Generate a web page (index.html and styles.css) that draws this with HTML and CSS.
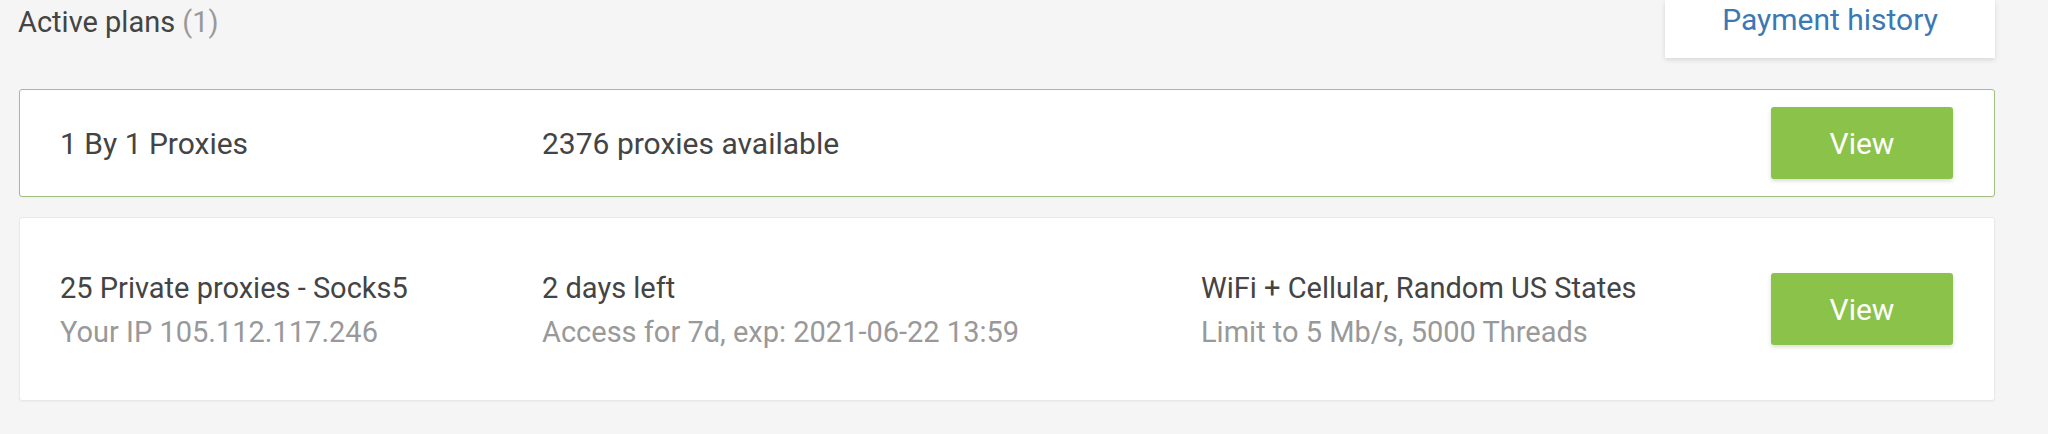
FILE: index.html
```html
<!DOCTYPE html>
<html lang="en">
  <head>
    <meta charset="UTF-8" />
    <meta name="viewport" content="width=device-width, initial-scale=1.0" />
    <title>Active plans</title>
    <link rel="stylesheet" href="styles.css">
  </head>
  <body>
    <div class="page">
      <div class="plans-header">
        <h2 class="plans-title">Active plans <span class="count">(1)</span></h2>
        <a href="#" class="history-btn">Payment history</a>
      </div>

      <div class="plan plan-active">
        <div class="col col-name">
          <div class="primary">1 By 1 Proxies</div>
        </div>
        <div class="col col-status">
          <div class="primary">2376 proxies available</div>
        </div>
        <div class="col col-info"></div>
        <button class="btn">View</button>
      </div>

      <div class="plan plan-detail">
        <div class="col col-name">
          <div class="primary">25 Private proxies - Socks5</div>
          <div class="secondary">Your IP 105.112.117.246</div>
        </div>
        <div class="col col-status">
          <div class="primary">2 days left</div>
          <div class="secondary">Access for 7d, exp: 2021-06-22 13:59</div>
        </div>
        <div class="col col-info">
          <div class="primary">WiFi + Cellular, Random US States</div>
          <div class="secondary">Limit to 5 Mb/s, 5000 Threads</div>
        </div>
        <button class="btn">View</button>
      </div>
    </div>
  </body>
</html>
```
FILE: styles.css
```css
body {
  font-family: Roboto, "Liberation Sans", sans-serif;
  background-color: #f5f5f5;
  margin: 0;
  padding: 0;
}

.page {
  padding: 0 53px 0 19px;
}

.plans-header {
  display: flex;
  justify-content: space-between;
  align-items: flex-start;
  height: 58px;
  margin-bottom: 31px;
}

.plans-title {
  margin: 0 0 0 -1px;
  padding-top: 4px;
  font-size: 29px;
  line-height: 36px;
  font-weight: 400;
  color: #444;
}

.count {
  color: #999;
}

.history-btn {
  display: block;
  width: 330px;
  height: 58px;
  box-sizing: border-box;
  padding-top: 2px;
  text-align: center;
  font-size: 30px;
  line-height: 36px;
  color: #3b78b4;
  text-decoration: none;
  background-color: white;
  box-shadow: 0 2px 5px rgba(0, 0, 0, 0.12);
}

.plan {
  display: flex;
  align-items: center;
  background-color: white;
  border: 1px solid #e9e9e9;
  border-radius: 3px;
  padding: 0 41px 0 40px;
  height: 184px;
  box-sizing: border-box;
  margin-bottom: 20px;
  box-shadow: 0 1px 2px rgba(0, 0, 0, 0.04);
}

.plan-active {
  height: 108px;
  border-color: #a3bf82;
}

.col {
  font-size: 30px;
  line-height: 44px;
  padding-top: 2px;
}

.plan-detail .col {
  font-size: 29px;
}

.col-name {
  width: 482px;
}

.col-status {
  width: 659px;
}

.col-info {
  flex: 1;
}

.primary {
  color: #444;
}

.secondary {
  color: #999;
}

.btn {
  width: 182px;
  height: 72px;
  background-color: #8bc34a;
  color: white;
  border: none;
  border-radius: 3px;
  font-family: Roboto, "Liberation Sans", sans-serif;
  font-size: 30px;
  font-weight: 400;
  cursor: pointer;
  box-shadow: 0 2px 4px rgba(0, 0, 0, 0.15);
}

.btn:hover {
  background-color: #7cb342;
}
```
